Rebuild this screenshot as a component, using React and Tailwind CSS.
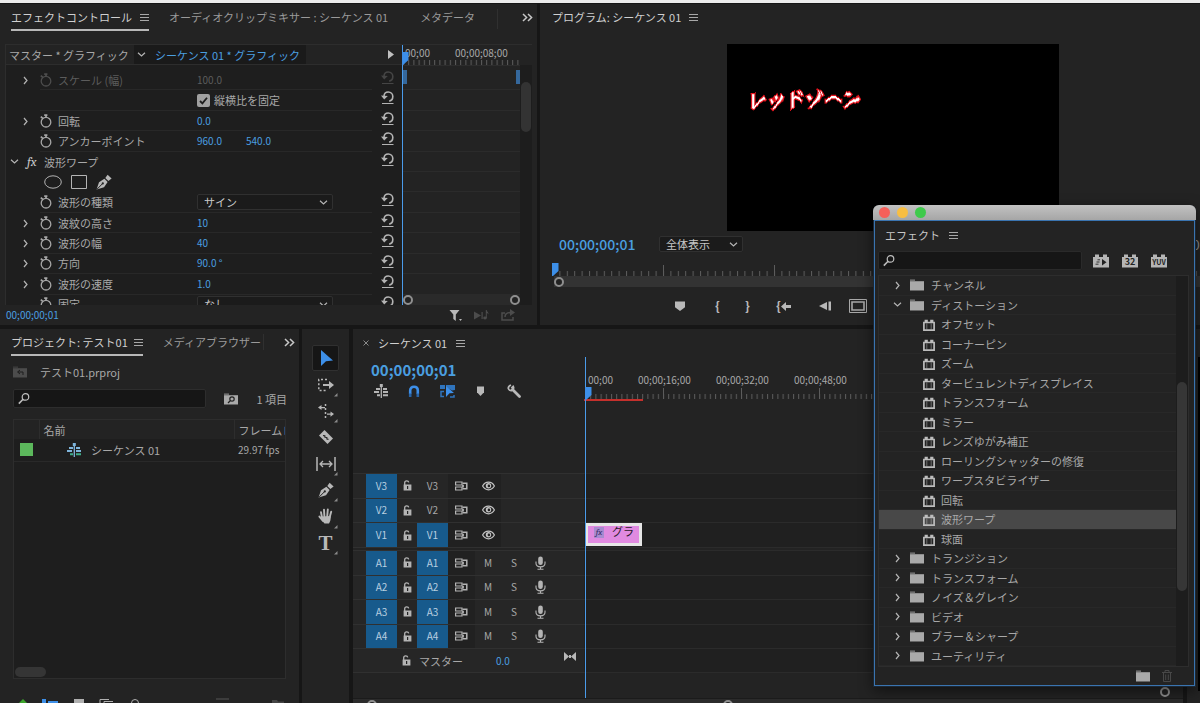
import React, { useState } from 'react';

const effectParams = [
  { label: 'スケール (幅)', values: ['100.0'], arrow: true, watch: true, disabled: true },
  { label: '', checkbox: '縦横比を固定' },
  { label: '回転', values: ['0.0'], arrow: true, watch: true },
  { label: 'アンカーポイント', values: ['960.0', '540.0'], watch: true },
  { label: '波形ワープ', heading: true },
  { label: '', shapes: true },
  { label: '波形の種類', select: 'サイン', watch: true },
  { label: '波紋の高さ', values: ['10'], arrow: true, watch: true },
  { label: '波形の幅', values: ['40'], arrow: true, watch: true },
  { label: '方向', values: ['90.0 °'], arrow: true, watch: true },
  { label: '波形の速度', values: ['1.0'], arrow: true, watch: true },
  { label: '固定', select: 'なし', watch: true },
];

const effectTree = [
  { name: 'チャンネル', type: 'folder' },
  { name: 'ディストーション', type: 'folder', open: true },
  { name: 'オフセット', type: 'effect' },
  { name: 'コーナーピン', type: 'effect' },
  { name: 'ズーム', type: 'effect' },
  { name: 'タービュレントディスプレイス', type: 'effect' },
  { name: 'トランスフォーム', type: 'effect' },
  { name: 'ミラー', type: 'effect' },
  { name: 'レンズゆがみ補正', type: 'effect' },
  { name: 'ローリングシャッターの修復', type: 'effect' },
  { name: 'ワープスタビライザー', type: 'effect' },
  { name: '回転', type: 'effect' },
  { name: '波形ワープ', type: 'effect' },
  { name: '球面', type: 'effect' },
  { name: 'トランジション', type: 'folder' },
  { name: 'トランスフォーム', type: 'folder' },
  { name: 'ノイズ＆グレイン', type: 'folder' },
  { name: 'ビデオ', type: 'folder' },
  { name: 'ブラー＆シャープ', type: 'folder' },
  { name: 'ユーティリティ', type: 'folder' },
];

/* ---------- icons ---------- */

function MenuIcon() {
  return (
    <svg width="9" height="9" viewBox="0 0 9 9" stroke="#a8a8a8" fill="none">
      <path d="M0 1.5h9M0 4.5h9M0 7.5h9" />
    </svg>
  );
}

function Chevron({ down, color = '#b4b4b4' }) {
  return (
    <svg width="9" height="9" viewBox="0 0 9 9" fill="none" stroke={color} strokeWidth="1.2">
      <path d={down ? 'M1 2.8l3.5 3.2L8 2.8' : 'M3 1l3 3.5L3 8'} />
    </svg>
  );
}

function DoubleChevron() {
  return (
    <svg width="11" height="9" viewBox="0 0 11 9" fill="none" stroke="#c8c8c8" strokeWidth="1.5">
      <path d="M1 1l3.6 3.5L1 8M6 1l3.6 3.5L6 8" />
    </svg>
  );
}

function StopwatchIcon({ dim }) {
  return (
    <svg width="12" height="14" viewBox="0 0 12 14" fill="none" stroke={dim ? '#4d4d4d' : '#a6a6a6'} strokeWidth="1.3">
      <circle cx="6" cy="8.2" r="4.8" />
      <path d="M4.2 1.2h3.2M6 1.2v2.4M.8 2.600l2 1.800" strokeWidth="1.7" />
    </svg>
  );
}

function ResetIcon({ dim }) {
  const color = dim ? '#454545' : '#b4b4b4';
  return (
    <svg width="13" height="14" viewBox="0 0 13 14" fill="none" stroke={color} strokeWidth="1.600">
      <path d="M3 5C3.200 2.600 5 1 7.200 1c2.600 0 4.600 2 4.600 4.500 0 2.300-1.400 4.200-3.600 4.600" />
      <path d="M0 4.600l3.200 3.800 3.600-3.400z" fill={color} stroke="none" />
      <path d="M1 12.500h11.500" strokeWidth="1" />
    </svg>
  );
}

function PenIcon({ size = 16 }) {
  return (
    <svg width={size} height={size} viewBox="0 0 16 16">
      <path d="M.6 15.600L3 8.200l5.400-3.400 3.200 3.200-3.600 5.200z" fill="#b8b8b8" />
      <path d="M9.300 3.900L11.600.8l4 3.800-3.200 2.500z" fill="#b8b8b8" />
      <path d="M1.200 15l5.200-5.200" stroke="#222" strokeWidth="1" />
      <circle cx="6.800" cy="9.400" r="1.100" fill="#222" />
    </svg>
  );
}

function SearchIcon() {
  return (
    <svg width="13" height="13" viewBox="0 0 13 13" fill="none" stroke="#bdbdbd" strokeWidth="1.300">
      <circle cx="8" cy="4.800" r="3.500" />
      <path d="M5.400 7.300L.9 12" strokeWidth="1.700" />
    </svg>
  );
}

function FolderIcon({ color = '#a9a9a9', children }) {
  return (
    <svg width="14" height="12" viewBox="0 0 14 12">
      <path d="M0 .5h5v1.300H0z" fill={color} opacity=".7" />
      <path d="M0 2.200h14V11.500H0z" fill={color} />
      {children}
    </svg>
  );
}

function EffectIcon() {
  return (
    <svg width="12" height="12" viewBox="0 0 12 12" fill="none" stroke="#bcbcbc">
      <path d="M.9 3.500h10.200v7.600H.9z" strokeWidth="1.700" />
      <path d="M3.200.8v2.500M8.800.8v2.500" strokeWidth="3.200" />
      <path d="M3.800 4.500v6M8.200 4.500v6" strokeWidth="1" opacity=".5" />
    </svg>
  );
}

function BadgeIcon({ text }) {
  return (
    <svg width="16" height="14" viewBox="0 0 16 14">
      <path d="M0 3h2V.5h4V3h4V.5h4V3h2v10.500H0z" fill="#b5b5b5" />
      {text ? (
        <text
          x="8"
          y="11"
          textAnchor="middle"
          fontSize={text.length > 2 ? 7 : 9}
          fontWeight="700"
          fontFamily="Noto Sans CJK JP, sans-serif"
          fill="#222"
        >
          {text}
        </text>
      ) : (
        <>
          <path d="M9 5v6.500l4.500-3.200z" fill="#222" />
          <path d="M4.500 5.800H7M3.500 8h3M2.500 10.200h3" stroke="#222" strokeWidth=".9" />
        </>
      )}
    </svg>
  );
}

function LockIcon() {
  return (
    <svg width="9" height="11" viewBox="0 0 9 11">
      <path d="M1.700 5V2.800C1.700 1.500 2.600.8 3.700.8s1.900.6 2 1.600" fill="none" stroke="#b4b4b4" strokeWidth="1.300" />
      <path d="M.6 4.500h7.800v6H.6z" fill="#b4b4b4" />
      <path d="M4 6h1.200v3H4z" fill="#222" />
    </svg>
  );
}

function SyncLockIcon() {
  return (
    <svg width="13" height="10" viewBox="0 0 13 10" fill="none" stroke="#b4b4b4">
      <path d="M.6 1h6.400v3H.6zM.6 6h6.400v3H.6z" strokeWidth="1.200" />
      <path d="M7.500 2.200h4.300v5.600H7.500" strokeWidth="1.500" />
      <path d="M8 3.800v2.600" strokeWidth="1.800" />
    </svg>
  );
}

function EyeIcon() {
  return (
    <svg width="13" height="10" viewBox="0 0 13 10">
      <path d="M.6 5C2 2.500 4 1.200 6.500 1.200S11 2.500 12.400 5C11 7.500 9 8.800 6.500 8.800S2 7.500.6 5z" fill="none" stroke="#c4c4c4" strokeWidth="1.200" />
      <circle cx="6.500" cy="4.800" r="2.700" fill="#c4c4c4" />
      <circle cx="6.900" cy="4.900" r="1.300" fill="#222" />
    </svg>
  );
}

function MicIcon() {
  return (
    <svg width="11" height="14" viewBox="0 0 11 14" fill="none" stroke="#b4b4b4" strokeWidth="1.100">
      <rect x="3.200" y=".5" width="4.600" height="8.500" rx="2.300" fill="#b4b4b4" stroke="none" />
      <path d="M1 5.500v1.800c0 2.300 2 3.600 4.500 3.600S10 9.600 10 7.300V5.500M5.500 11v2M2.500 13.300h6" />
    </svg>
  );
}

function SequenceIcon({ tint }) {
  const a = tint ? '#7fb5dc' : '#b4b4b4';
  const b = tint ? '#3fae8a' : '#b4b4b4';
  return (
    <svg width="15" height="14" viewBox="0 0 15 14" strokeWidth="2">
      <path d="M2 5h4M9 5h4M0 8h5" stroke={a} />
      <path d="M9 8h5" stroke={a} />
      <path d="M3 11.300h3M9 11.300h5" stroke={b} />
      <path d="M7.300 2v12" stroke={a} strokeWidth="1.300" />
      <path d="M5.800 0h3v3h-3z" fill={a} />
    </svg>
  );
}

function MarkerIcon({ width = 9 }) {
  return (
    <svg width={width} height="10" viewBox="0 0 9 10" preserveAspectRatio="none">
      <path d="M0 .5h9v5.700L4.500 10 0 6.200z" fill="#b9b9b9" />
    </svg>
  );
}

function Playhead() {
  return (
    <svg width="7" height="13" viewBox="0 0 7 13">
      <path d="M0 0h6.500v8L1 13H0z" fill="#3d8fe8" />
    </svg>
  );
}

function Ring() {
  return <span className="block size-[10px] rounded-full border-2 border-[#8f8f8f] bg-[#222]" />;
}

/* tick marks of a time ruler, `step` px apart, a long one after each `every` */
function Ticks({ id, step, every = 0, height = 11 }) {
  return (
    <svg className="block w-full" height={height}>
      <defs>
        <pattern id={`${id}-s`} width={step} height={height} patternUnits="userSpaceOnUse">
          <path d={`M.5 ${height - 5}v5`} stroke="#5c5c5c" />
        </pattern>
        {every > 0 && (
          <pattern id={`${id}-l`} width={step * every} height={height} patternUnits="userSpaceOnUse">
            <path d={`M.5 0v${height}`} stroke="#5c5c5c" />
          </pattern>
        )}
      </defs>
      <rect width="100%" height={height} fill={`url(#${id}-s)`} />
      {every > 0 && <rect width="100%" height={height} fill={`url(#${id}-l)`} />}
    </svg>
  );
}

/* ---------- effect controls ---------- */

function SmallSelect({ label, options, className }) {
  return (
    <div className={`relative flex items-center rounded-xs border border-[#303030] bg-[#1b1b1b] text-[#c8c8c8] ${className}`}>
      <select aria-label={label} className="h-full w-full appearance-none bg-transparent pl-[6px] text-[11px] leading-none outline-none">
        {options.map((o) => (
          <option key={o}>{o}</option>
        ))}
      </select>
      <span className="pointer-events-none absolute right-1">
        <Chevron down />
      </span>
    </div>
  );
}

function ParamRow({ param }) {
  const [checked, setChecked] = useState(true);
  const { label, values, arrow, watch, disabled, heading, shapes, checkbox, select } = param;
  return (
    <div className="flex items-center">
      {heading ? (
        <div className="flex h-full flex-1 items-center pl-1">
          <button aria-label="閉じる"><Chevron down /></button>
          <span className="ml-2 w-[17px] font-serif text-[13px] leading-none text-[#c8c8c8] italic">fx</span>
          <span className="text-[#a8a8a8]">{label}</span>
        </div>
      ) : (
        <>
          <div className="flex w-[34px] justify-center pl-1">
            {arrow && <button aria-label={`${label}を開く`}><Chevron /></button>}
          </div>
          <div className={`flex h-full flex-1 items-center ${shapes ? '' : 'border-b border-[#282828]'}`}>
            {shapes && (
              <div className="flex items-center gap-[9px] pl-1">
                <button aria-label="楕円形マスク">
                  <svg width="18" height="14" viewBox="0 0 18 14" fill="none" stroke="#b4b4b4"><ellipse cx="9" cy="7" rx="8.300" ry="6.200" /></svg>
                </button>
                <button aria-label="長方形マスク">
                  <svg width="16" height="14" viewBox="0 0 16 14" fill="none" stroke="#b4b4b4"><path d="M.5.5h15v13H.5z" /></svg>
                </button>
                <button aria-label="ペンマスク"><PenIcon /></button>
              </div>
            )}
            {!shapes && (
              <>
                <div className={`flex w-[157px] items-center ${disabled ? 'text-[#5c5c5c]' : 'text-[#a8a8a8]'}`}>
                  {watch && (
                    <button aria-label={`${label} アニメーション`} className="mr-[6px]"><StopwatchIcon dim={disabled} /></button>
                  )}
                  {label}
                </div>
                {checkbox && (
                  <label className="flex items-center gap-1 text-[#a8a8a8]">
                    <span className="grid size-[13px] place-items-center">
                      <input
                        type="checkbox"
                        checked={checked}
                        onChange={() => setChecked(!checked)}
                        className="col-start-1 row-start-1 size-[13px] appearance-none rounded-xs bg-[#a0a0a0]"
                      />
                      {checked && (
                        <svg className="pointer-events-none col-start-1 row-start-1" width="9" height="9" viewBox="0 0 9 9" fill="none" stroke="#1d1d1d" strokeWidth="1.800">
                          <path d="M1 5l2.400 2.400L8 1.800" />
                        </svg>
                      )}
                    </span>
                    {checkbox}
                  </label>
                )}
                {values && values.map((v) => (
                  <span key={v} className={`w-[49px] text-[10px] ${disabled ? 'text-[#5c5c5c]' : 'text-[#4a9fe0]'}`}>{v}</span>
                ))}
                {select && <SmallSelect label={label} options={[select]} className="h-4 w-[136px]" />}
              </>
            )}
          </div>
        </>
      )}
      <div className="flex h-full w-[30px] justify-center pt-px">
        {!shapes && <button aria-label="リセット" className="self-start"><ResetIcon dim={disabled} /></button>}
      </div>
    </div>
  );
}

function EffectControls() {
  return (
    <section className="flex w-[45%] flex-col border-r-[3px] border-[#161616] bg-[#232323] text-[11px] leading-4">
      <div className="flex h-10 items-start pt-[5px] pr-1 pl-[11px]">
        <button className="flex items-center gap-2 border-b-2 border-[#b8b8b8] pb-1 whitespace-nowrap text-[#d0d0d0]">
          エフェクトコントロール <MenuIcon />
        </button>
        <button className="ml-5 whitespace-nowrap text-[#9a9a9a]">オーディオクリップミキサー : シーケンス 01</button>
        <button className="ml-8 whitespace-nowrap text-[#9a9a9a]">メタデータ</button>
        <span className="ml-auto h-5 border-l border-[#303030]" />
        <button aria-label="その他のパネル" className="ml-6 flex h-5 items-center pb-1"><DoubleChevron /></button>
      </div>

      <div className="mr-[5px] ml-[5px] flex border-t border-l border-[#2d2d2d]">
        <div className="min-w-0 flex-1 bg-[#1e1e1e]">
          <div className="flex h-5 items-center border-b border-[#2d2d2d] bg-[#232323] pl-[3px]">
            <span className="w-[125px] whitespace-nowrap text-[#a8a8a8]">マスター * グラフィック</span>
            <button className="flex h-full w-[172px] items-center gap-[9px] bg-[#1a1a1a] pl-[3px] whitespace-nowrap text-[#4a9fe0]">
              <Chevron down />
              シーケンス 01 * グラフィック
            </button>
            <button aria-label="タイムラインを表示" className="mr-2 ml-auto">
              <svg width="6" height="9" viewBox="0 0 6 9"><path d="M0 0l6 4.500L0 9z" fill="#c0c0c0" /></svg>
            </button>
          </div>
          <div className="h-[240px] overflow-hidden pt-[5px]">
            <div className="grid h-[245px] auto-rows-fr">
              {effectParams.map((p, i) => <ParamRow key={i} param={p} />)}
            </div>
          </div>
        </div>

        <div className="relative w-[118px] border-l border-[#161616]">
          <div className="h-5 pt-[2px]">
            <div className="flex text-[10px] leading-3 whitespace-nowrap text-[#a8a8a8]">
              <span className="w-[52px] pl-[2px]">00;00</span>
              <span>00;00;08;00</span>
            </div>
            <Ticks id="ec" step={5.2} height={6} />
          </div>
          <div className="h-[240px] overflow-hidden border-t border-[#2d2d2d] pt-1">
            <div className="grid h-[245px] auto-rows-fr">
              {effectParams.map((p, i) => (
                <div key={i} className="flex justify-between border-b border-[#2b2b2b]">
                  {i === 0 && (
                    <>
                      <span className="h-[14px] w-1 bg-[#35689c]" />
                      <span className="h-[14px] w-1 bg-[#35689c]" />
                    </>
                  )}
                </div>
              ))}
            </div>
          </div>
          <div className="absolute inset-x-0 bottom-0 flex h-[11px] items-center justify-between rounded-full bg-[#2a2a2a]">
            <Ring /><Ring />
          </div>
          <span className="absolute -left-px inset-y-0 w-px bg-[#4a9bea]" />
          <span className="absolute top-[7px] -left-px"><Playhead /></span>
        </div>
        <div className="mt-5 w-3 bg-[#1d1d1d] pt-[17px]">
          <div className="mx-px h-[50px] rounded-full bg-[#333]" />
        </div>
      </div>

      <div className="flex h-5 items-center pr-[22px] pl-[6px]">
        <span className="flex-1 text-[10px] text-[#4a9fe0]">00;00;00;01</span>
        <button aria-label="フィルター" className="mr-3">
          <svg width="13" height="13" viewBox="0 0 13 13"><path d="M.5 1h10L6.800 5.500V12L4.300 10V5.500zM10 10h3l-1.500 2z" fill="#b8b8b8" /></svg>
        </button>
        <button aria-label="オーディオを再生" className="mr-3">
          <svg width="15" height="12" viewBox="0 0 15 12" fill="#4c4c4c"><path d="M0 2.500l7 4-7 4zM7.500 3v7h1.200V3z" /><ellipse cx="11" cy="9" rx="1.800" ry="1.400" /><path d="M11.800 1h1c.2 2 2 2 1.600 4.500-.3-1-.8-1.500-1.600-1.600V9h-1z" /></svg>
        </button>
        <button aria-label="書き出し">
          <svg width="14" height="12" viewBox="0 0 14 12" fill="none" stroke="#4c4c4c" strokeWidth="1.500"><path d="M4 4H1v7h11V8M4 8c0-3 2-4.500 6-4.500" /><path d="M9 0l5 3.500L9 7z" fill="#4c4c4c" stroke="none" /></svg>
        </button>
      </div>
    </section>
  );
}

/* ---------- program monitor ---------- */

function WarpedTitle() {
  return (
    <svg className="pt-8 pl-3" width="150" height="80">
      <defs>
        <filter id="wave" filterUnits="userSpaceOnUse" x="0" y="0" width="136" height="48" colorInterpolationFilters="sRGB">
          <feFlood x="0" y="0" width="18" height="48" floodColor="#808080" result="base" />
          <feFlood x="0" y="0" width="9" height="48" floodColor="#80ff80" result="up" />
          <feFlood x="9" y="0" width="9" height="48" floodColor="#800080" result="down" />
          <feMerge x="0" y="0" width="18" height="48" result="cell">
            <feMergeNode in="base" />
            <feMergeNode in="up" />
            <feMergeNode in="down" />
          </feMerge>
          <feTile in="cell" result="tiled" />
          <feGaussianBlur in="tiled" stdDeviation="3 0" result="map" />
          <feDisplacementMap in="SourceGraphic" in2="map" scale="7" xChannelSelector="R" yChannelSelector="G" />
        </filter>
      </defs>
      <text
        x="9"
        y="31"
        fontSize="19"
        fontWeight="500"
        fontFamily="Noto Sans CJK JP, sans-serif"
        fill="#fff"
        stroke="#e6141e"
        strokeWidth="2.500"
        paintOrder="stroke"
        filter="url(#wave)"
      >
        レッドゾーン
      </text>
    </svg>
  );
}

function ProgramMonitor() {
  return (
    <section className="flex min-w-0 flex-1 flex-col bg-[#232323] text-[11px] leading-4">
      <div className="flex h-10 items-start gap-2 pt-[5px] pl-3 text-[#d0d0d0]">
        プログラム: シーケンス 01
        <button aria-label="パネルメニュー" className="flex h-4 items-center"><MenuIcon /></button>
      </div>
      <div className="ml-[187px] h-[187px] w-[332px] bg-black">
        <WarpedTitle />
      </div>
      <div className="flex h-[26px] items-center pl-[19px]">
        <span className="w-[100px] text-[14px] font-medium text-[#4a9fe0]">00;00;00;01</span>
        <SmallSelect label="ズームレベル" options={['全体表示']} className="h-4 w-[84px]" />
        <span className="ml-auto w-2 overflow-hidden text-[14px] text-[#8a8a8a]">00;00;07;21</span>
      </div>
      <div className="relative pt-2 pl-3">
        <Ticks id="pm" step={7.4} every={15} />
        <span className="absolute top-[6px] left-3"><Playhead /></span>
      </div>
      <div className="ml-[14px] flex h-[11px] items-center bg-[#333]"><Ring /></div>
      <div className="flex h-[38px] items-center pl-[135px]">
        <button aria-label="マーカーを追加" className="w-[11px]"><MarkerIcon width="10" /></button>
        <button aria-label="インをマーク" className="ml-[27px] w-[9px] text-[13px] font-bold text-[#b8b8b8]">{'{'}</button>
        <button aria-label="アウトをマーク" className="ml-[21px] w-[9px] text-[13px] font-bold text-[#b8b8b8]">{'}'}</button>
        <button aria-label="インへ移動" className="ml-6 flex items-center text-[13px] font-bold text-[#b8b8b8]">
          {'{'}
          <svg width="10" height="9" viewBox="0 0 10 9"><path d="M0 4.500L5 0v3h5v3H5v3z" fill="#b8b8b8" /></svg>
        </button>
        <button aria-label="前のフレーム" className="ml-7">
          <svg width="12" height="10" viewBox="0 0 12 10"><path d="M8 1v8L0 5zM9.500.5H12v9H9.500z" fill="#b8b8b8" /></svg>
        </button>
        <button aria-label="再生" className="ml-[18px]">
          <svg width="18" height="14" viewBox="0 0 18 14" fill="none" stroke="#a8a8a8"><path d="M.5.5h17v13H.5z" /><path d="M3 3h12v8H3z" strokeWidth="1.600" /></svg>
        </button>
      </div>
    </section>
  );
}

/* ---------- project ---------- */

function ProjectPanel() {
  return (
    <section className="flex w-[302px] shrink-0 flex-col overflow-hidden border-r-[3px] border-[#161616] bg-[#232323] text-[11px] leading-4">
      <div className="flex h-8 items-start pt-[5px] pr-1 pl-[11px]">
        <button className="flex items-center gap-[6px] border-b-2 border-[#b8b8b8] pb-1 whitespace-nowrap text-[#d0d0d0]">
          プロジェクト: テスト01 <MenuIcon />
        </button>
        <button className="ml-5 flex-1 border-r border-[#303030] text-left whitespace-nowrap text-[#9a9a9a]">メディアブラウザー</button>
        <button aria-label="その他のパネル" className="ml-5 flex h-4 items-center"><DoubleChevron /></button>
      </div>
      <div className="flex h-[22px] items-center gap-[13px] pl-[13px] text-[#a8a8a8]">
        <FolderIcon color="#4c4c4c">
          <path d="M10 9V6H5M7 4L4.500 6 7 8" fill="none" stroke="#1d1d1d" />
        </FolderIcon>
        テスト01.prproj
      </div>
      <div className="mt-[6px] flex items-center pr-3 pl-[13px]">
        <label className="flex h-[19px] flex-1 items-center rounded-xs border border-[#2d2d2d] bg-[#161616] pl-1">
          <SearchIcon />
          <input aria-label="プロジェクトを検索" className="w-full bg-transparent pl-1 text-[#c8c8c8] outline-none" />
        </label>
        <button aria-label="検索ビン" className="mx-[18px]">
          <FolderIcon>
            <circle cx="8" cy="6" r="2.200" fill="none" stroke="#222" strokeWidth="1.200" />
            <path d="M6.500 7.500L4 10" stroke="#222" strokeWidth="1.300" />
          </FolderIcon>
        </button>
        <span className="text-[#a8a8a8]">1 項目</span>
      </div>
      <div className="mt-[11px] mr-[13px] ml-[13px] flex min-h-0 flex-1 flex-col overflow-hidden border border-[#2d2d2d] bg-[#1e1e1e]">
        <table className="w-full table-fixed text-left text-[#a8a8a8]">
          <thead>
            <tr className="h-[19px] bg-[#232323]">
              <th className="w-[25px] border-r border-[#2d2d2d]" aria-label="ラベル" />
              <th className="border-r border-[#2d2d2d] pl-1 font-normal">名前</th>
              <th className="w-[51px] overflow-hidden pl-1 font-normal whitespace-nowrap">フレームレート</th>
            </tr>
          </thead>
          <tbody>
            <tr className="h-[22px] border-b border-[#292929]">
              <td className="pl-[6px]"><span className="block size-[13px] bg-[#5cb85c]" /></td>
              <td className="pl-7">
                <span className="flex items-center gap-[9px]"><SequenceIcon tint />シーケンス 01</span>
              </td>
              <td className="pl-1 text-[10px] whitespace-nowrap">29.97 fps</td>
            </tr>
          </tbody>
        </table>
        <div className="mt-auto mb-px ml-px h-[10px] w-[31px] rounded-full bg-[#353535]" />
      </div>
      <div className="flex h-6 shrink-0 items-end overflow-hidden pl-[18px]">
        <svg width="270" height="5" viewBox="0 0 270 5">
          <path d="M1 5l4-4 4 4z" fill="#3da52c" />
          <path d="M24 1h4v4h-4zM30 3h10v2H30z" fill="#3d8fe8" />
          <path d="M56 1h10v4H56z" fill="#b0b0b0" />
          <path d="M82 5V1.500h9M86 5V3.500h9" fill="none" stroke="#b0b0b0" />
          <circle cx="117" cy="5" r="3.500" fill="none" stroke="#b0b0b0" />
          <path d="M198 1h13" stroke="#565656" />
          <path d="M254 2h5l1 1.500h6V5h-12z" fill="#454545" />
        </svg>
      </div>
    </section>
  );
}

/* ---------- tools ---------- */

const tools = [
  { name: '選択ツール', icon: <path d="M3 0l12 10.500-7 .8L3 16z" fill="#3d8fe8" /> },
  {
    name: 'トラックの前方選択ツール',
    more: true,
    icon: (
      <>
        <path d="M9 2.500H.8v11H9" fill="none" stroke="#b8b8b8" strokeWidth="1.500" strokeDasharray="2 2" />
        <path d="M5 7h6V4l5 4-5 4V9H5z" fill="#b8b8b8" />
      </>
    ),
  },
  {
    name: 'リップルツール',
    more: true,
    icon: (
      <>
        <path d="M7.500 1v14" stroke="#b8b8b8" strokeWidth="1.500" strokeDasharray="2 2" />
        <path d="M0 4.500L3.500 2v2H7v1.200H3.500V7zM16 11l-3.500-2.500v2H9v1.200h3.500v2z" fill="#b8b8b8" />
      </>
    ),
  },
  {
    name: 'レーザーツール',
    icon: (
      <>
        <path d="M1 6.500L6.500 1 15 9.500 9.500 15z" fill="#b8b8b8" />
        <path d="M5 6.500l1.800.300.200 1.500 1.800.200.200 1.500 1.500.300" fill="none" stroke="#222" strokeWidth="1.200" />
      </>
    ),
  },
  {
    name: 'スリップツール',
    more: true,
    icon: (
      <>
        <path d="M-1 1v14M17 1v14" stroke="#b8b8b8" strokeWidth="1.500" />
        <path d="M3 8h10M5 5L2 8l3 3M11 5l3 3-3 3" fill="none" stroke="#b8b8b8" strokeWidth="1.300" />
      </>
    ),
  },
  { name: 'ペンツール', more: true, pen: true },
  {
    name: '手のひらツール',
    more: true,
    icon: (
      <path
        d="M4 9.500L3 4.200M6.400 8.500L6 1.600M9.200 8.500l.6-7M11.600 9.500l1.600-5.800M5 13L1.400 8.600"
        stroke="#b8b8b8"
        strokeWidth="1.900"
        strokeLinecap="round"
      />
    ),
    palm: true,
  },
  { name: '横書き文字ツール', more: true, type: true },
];

function ToolsPanel() {
  const [active, setActive] = useState(0);
  return (
    <section className="flex w-[51px] shrink-0 flex-col items-center border-r-[4px] border-[#161616] bg-[#232323] pt-4">
      <div className="grid h-[211px] auto-rows-fr">
        {tools.map((t, i) => (
          <button
            key={t.name}
            aria-label={t.name}
            onClick={() => setActive(i)}
            className={`relative grid w-[27px] place-items-center rounded-xs border ${i === active ? 'border-[#303030] bg-[#161616]' : 'border-transparent'}`}
          >
            {t.pen && <PenIcon />}
            {t.type && <span className="font-['Liberation_Serif',serif] text-[21px] leading-5 font-bold text-[#b8b8b8]">T</span>}
            {t.icon && (
              <svg width="16" height="16" viewBox="0 0 16 16" overflow="visible">
                {t.icon}
                {t.palm && <path d="M3 8.500l9.600-.5c.4 3-.2 5-1.600 7.500H6.500L3.600 12z" fill="#b8b8b8" />}
              </svg>
            )}
            {t.more && (
              <svg className="absolute right-0 bottom-0" width="4" height="4" viewBox="0 0 4 4"><path d="M3.500 0v3.500H0z" fill="#8a8a8a" /></svg>
            )}
          </button>
        ))}
      </div>
    </section>
  );
}

/* ---------- timeline ---------- */

function TrackHeader({ name, targeted, audio }) {
  return (
    <div className="flex items-stretch border-t border-[#303030] bg-[#262626] pl-[13px] text-[10px] text-[#a8a8a8]">
      <button className="w-[31px] bg-[#175a8c] text-[#b9cfe0]">{name}</button>
      <button aria-label={`${name} ロック`} className="grid w-5 place-items-center"><LockIcon /></button>
      <button className={`w-[31px] ${targeted ? 'bg-[#175a8c] text-[#b9cfe0]' : ''}`}>{name}</button>
      <button aria-label={`${name} 同期ロック`} className="grid w-[27px] place-items-center bg-[#212121]"><SyncLockIcon /></button>
      {audio ? (
        <>
          <button className="w-[26px]">M</button>
          <button className="w-[26px]">S</button>
          <button aria-label={`${name} ボイスオーバー`} className="grid w-[26px] place-items-center"><MicIcon /></button>
        </>
      ) : (
        <button aria-label={`${name} 表示`} className="grid w-[26px] place-items-center bg-[#212121]"><EyeIcon /></button>
      )}
    </div>
  );
}

function Lane({ children }) {
  return <div className="border-t border-[#2b2b2b] bg-[#202020]">{children}</div>;
}

function Timeline() {
  return (
    <section className="relative flex min-w-0 flex-1 flex-col overflow-hidden bg-[#232323] text-[11px] leading-4">
      <div className="flex h-7 items-center gap-[9px] pl-[10px] text-[#d0d0d0]">
        <button aria-label="閉じる">
          <svg width="6" height="6" viewBox="0 0 6 6" stroke="#8a8a8a"><path d="M.5.5l5 5M5.500.5l-5 5" /></svg>
        </button>
        シーケンス 01
        <button aria-label="パネルメニュー"><MenuIcon /></button>
      </div>

      <div className="flex min-h-0 flex-1">
        <div className="flex w-[231px] shrink-0 flex-col">
          <div className="h-[116px] pt-[5px] pl-[18px]">
            <div className="text-[15px] leading-4 font-bold text-[#4a9fe0]">00;00;00;01</div>
            <div className="mt-[5px] flex h-4 items-center">
              <button aria-label="ネスト" className="ml-[3px] w-[33px]"><SequenceIcon /></button>
              <button aria-label="スナップ" className="w-[33px]">
                <svg width="14" height="12" viewBox="0 0 14 12" fill="none" strokeWidth="2.600">
                  <path d="M3.200 9V5.500C3.200 3.200 4.800 1.700 7 1.700s3.800 1.500 3.800 3.800V9" stroke="#3d8fe8" />
                  <path d="M3.200 8.500V12M10.800 8.500V12" stroke="#2863a5" />
                </svg>
              </button>
              <button aria-label="リンクされた選択" className="w-[37px]">
                <svg width="15" height="14" viewBox="0 0 15 14">
                  <path d="M0 1h5v4H0zM6 1h9v5l-3 .5L6 3z" fill="#2f74bd" />
                  <path d="M6 2l8 7-4.500.3L6 13z" fill="#3d8fe8" />
                  <path d="M4 7.500H1v5h3M14 11v2h-4" fill="none" stroke="#2f74bd" strokeWidth="1.500" />
                </svg>
              </button>
              <button aria-label="マーカー" className="w-[30px]"><MarkerIcon width="7" /></button>
              <button aria-label="タイムライン表示設定">
                <svg width="14" height="14" viewBox="0 0 14 14" fill="none" stroke="#b8b8b8">
                  <path d="M5.500 5.500l7 7" strokeWidth="2.800" strokeLinecap="round" />
                  <path d="M4 1c-2 .8-3 2-2.600 3.600.4 1.600 2.200 2.300 3.600 1.700C6.500 5.600 7 3.700 6.200 2.400L4.400 4.200" strokeWidth="1.800" />
                </svg>
              </button>
            </div>
          </div>
          <div className="grid h-[74px] grid-rows-3">
            <TrackHeader name="V3" />
            <TrackHeader name="V2" />
            <TrackHeader name="V1" targeted />
          </div>
          <div className="h-[3px] border-t border-[#303030]" />
          <div className="grid h-[98px] grid-rows-4">
            <TrackHeader name="A1" targeted audio />
            <TrackHeader name="A2" targeted audio />
            <TrackHeader name="A3" targeted audio />
            <TrackHeader name="A4" targeted audio />
          </div>
          <div className="flex h-[25px] items-center border-y border-[#303030] bg-[#262626] pl-[49px] text-[#a8a8a8]">
            <button aria-label="マスター ロック" className="w-[17px]"><LockIcon /></button>
            <span className="w-[77px]">マスター</span>
            <span className="text-[10px] text-[#4a9fe0]">0.0</span>
            <button aria-label="トラックを展開" className="mr-2 ml-auto pb-2">
              <svg width="12" height="9" viewBox="0 0 12 9"><path d="M0 0l5 4.500L0 9zM12 0L7 4.500 12 9zM5 3h2v3H5z" fill="#b8b8b8" /></svg>
            </button>
          </div>
        </div>

        <div className="relative flex min-w-0 flex-1 flex-col">
          <div className="h-[116px] pt-[17px]">
            <div className="flex text-[10px] leading-3 whitespace-nowrap text-[#a8a8a8]">
              <span className="w-[54px] pl-1">00;00</span>
              <span className="w-[78px]">00;00;16;00</span>
              <span className="w-[78px]">00;00;32;00</span>
              <span className="w-[78px]">00;00;48;00</span>
            </div>
            <div className="pt-[2px] pl-px"><Ticks id="tl" step={5.2} every={15} /></div>
            <div className="h-[2px] w-[59px] bg-[#c5302c]" />
          </div>
          <div className="grid h-[74px] grid-rows-3">
            <Lane />
            <Lane />
            <Lane>
              <div className="ml-px flex h-[23px] w-[57px] border-[3px] border-[#e6e6e6] bg-[#e08ae0] pl-[6px]">
                <span className="mt-px mr-2 grid h-[11px] w-[10px] place-items-center bg-[#a88bd0] font-serif text-[9px] leading-none text-[#3a2a66] italic">fx</span>
                <span className="-mt-[3px] text-[#2a1a2a]">グラ</span>
              </div>
            </Lane>
          </div>
          <div className="h-[3px] border-t border-[#2b2b2b]" />
          <div className="grid h-[98px] grid-rows-4">
            <Lane /><Lane /><Lane /><Lane />
          </div>
          <div className="h-[25px] border-y border-[#2b2b2b] bg-[#202020]" />
          <span className="absolute top-0 bottom-0 left-px w-px bg-[#4a9bea]" />
          <span className="absolute top-[30px] left-px"><Playhead /></span>
        </div>
      </div>
      <div className="flex h-[5px] shrink-0 items-start justify-between overflow-hidden border-t border-[#1b1b1b] bg-[#2b2b2b] pt-[1px] pr-[450px] pl-[14px]">
        <Ring /><Ring />
      </div>
      <div className="absolute right-[13px] bottom-[6px]"><Ring /></div>
    </section>
  );
}

/* ---------- floating effects window ---------- */

function EffectsWindow() {
  const [selected, setSelected] = useState(12);
  return (
    <div className="absolute top-[205px] right-1 w-[323px] overflow-hidden rounded-t-md bg-[#1c2733] text-[11px] leading-4 shadow-[0_4px_14px_rgba(0,0,0,0.5)]">
      <div className="flex h-[15px] items-center gap-[7px] bg-linear-to-b from-[#c2c2c2] to-[#a6a6a6] pl-[6px]">
        <button aria-label="閉じる" className="size-[11px] rounded-full bg-[#f5605a]" />
        <button aria-label="しまう" className="size-[11px] rounded-full bg-[#f8be42]" />
        <button aria-label="拡大" className="size-[11px] rounded-full bg-[#3fca4b]" />
      </div>
      <div className="mx-px mb-px border border-[#3a74b0] bg-[#232323]">
        <div className="flex h-7 items-center gap-[9px] pl-[10px] text-[#c8c8c8]">
          エフェクト
          <button aria-label="パネルメニュー"><MenuIcon /></button>
        </div>
        <div className="mt-[2px] flex items-center pl-[3px]">
          <label className="flex h-[19px] w-[204px] items-center rounded-xs border border-[#2a2a2a] bg-[#161616] pl-1">
            <SearchIcon />
            <input aria-label="エフェクトを検索" className="w-full bg-transparent pl-1 text-[#c8c8c8] outline-none" />
          </label>
          <div className="ml-[11px] flex gap-[13px]">
            <button aria-label="高速処理"><BadgeIcon /></button>
            <button aria-label="32 ビットカラー"><BadgeIcon text="32" /></button>
            <button aria-label="YUV エフェクト"><BadgeIcon text="YUV" /></button>
          </div>
        </div>
        <div className="mt-[5px] mr-[5px] ml-[3px] flex border border-[#2d2d2d]">
          <ul className="grid h-[390px] flex-1 auto-rows-fr text-[#a8a8a8]">
            {effectTree.map((item, i) => (
              <li key={i} className="border-b border-[#282828]">
                <button
                  onClick={() => setSelected(i)}
                  className={`flex h-full w-full items-center ${i === selected ? 'bg-[#484848]' : ''} ${item.type === 'folder' ? 'pl-[14px]' : 'pl-11'}`}
                >
                  {item.type === 'folder' ? (
                    <>
                      <Chevron down={item.open} />
                      <span className="mr-[7px] ml-2"><FolderIcon /></span>
                    </>
                  ) : (
                    <span className="mr-[6px] pt-[2px]"><EffectIcon /></span>
                  )}
                  {item.name}
                </button>
              </li>
            ))}
          </ul>
          <div className="w-3 bg-[#1d1d1d] pt-[106px]">
            <div className="mx-px h-[209px] rounded-full bg-[#363636]" />
          </div>
        </div>
        <div className="flex h-[18px] items-center justify-end gap-3 pr-[22px]">
          <button aria-label="新規カスタムビン"><FolderIcon /></button>
          <button aria-label="削除">
            <svg width="10" height="12" viewBox="0 0 10 12" fill="none" stroke="#484848"><path d="M0 2.500h10M3 2.500v-2h4v2M1.500 3v8.500h7V3M3.700 4.500v5.500M6.300 4.500v5.500" /></svg>
          </button>
        </div>
      </div>
    </div>
  );
}

export default function App() {
  return (
    <div className="relative flex h-screen flex-col overflow-hidden bg-[#161616] font-['Noto_Sans_CJK_JP',sans-serif]">
      <div className="h-[3px] shrink-0 bg-[#ececec]" />
      <div className="flex shrink-0 pt-px">
        <EffectControls />
        <ProgramMonitor />
      </div>
      <div className="mt-[4px] flex min-h-0 flex-1">
        <ProjectPanel />
        <ToolsPanel />
        <Timeline />
        <section aria-label="オーディオメーター" className="ml-1 w-[13px] bg-[#232323] pt-7 pb-3 pl-[11px]">
          <div className="h-full bg-black" />
        </section>
      </div>
      <EffectsWindow />
    </div>
  );
}
